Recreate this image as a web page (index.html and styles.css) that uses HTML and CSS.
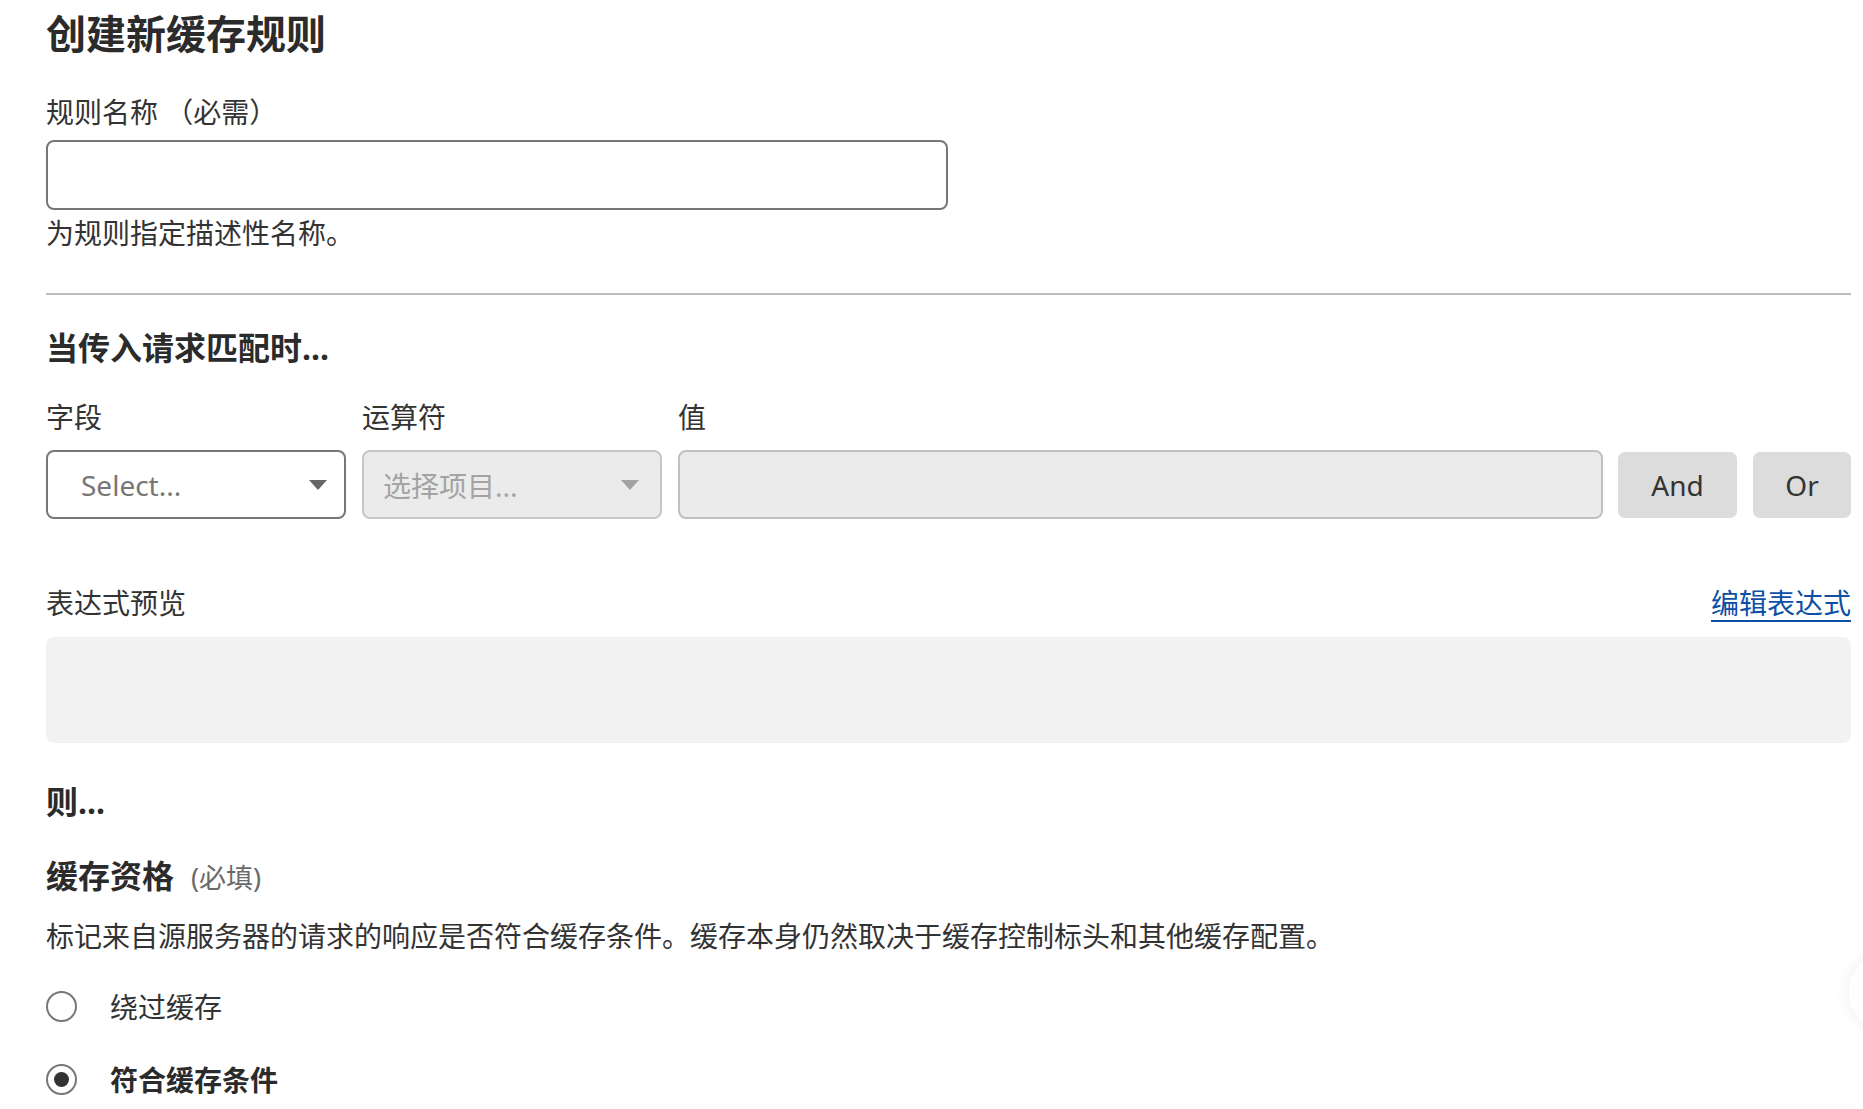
FILE: index.html
```html
<!DOCTYPE html>
<html lang="zh-CN">
<head>
    <meta charset="UTF-8">
    <meta name="viewport" content="width=device-width, initial-scale=1.0">
    <title>创建新缓存规则</title>
    <link rel="stylesheet" href="styles.css">
</head>
<body>

<div class="page">
    <h1 class="page-title">创建新缓存规则</h1>

    <label class="field-label" for="rule-name">规则名称 （必需）</label>
    <input class="text-input" id="rule-name" type="text">
    <p class="help-text">为规则指定描述性名称。</p>

    <hr class="divider">

    <h3 class="section-title">当传入请求匹配时...</h3>

    <div class="match-row">
        <div class="match-col col-field">
            <span class="field-label">字段</span>
            <div class="select">
                <span class="select-text">Select...</span>
                <span class="select-arrow"></span>
            </div>
        </div>
        <div class="match-col col-operator">
            <span class="field-label">运算符</span>
            <div class="select disabled">
                <span class="select-text">选择项目...</span>
                <span class="select-arrow"></span>
            </div>
        </div>
        <div class="match-col col-value">
            <span class="field-label">值</span>
            <div class="value-input"></div>
        </div>
        <button class="logic-btn btn-and">And</button>
        <button class="logic-btn btn-or">Or</button>
    </div>

    <div class="preview-head">
        <span class="field-label">表达式预览</span>
        <a class="edit-link" href="#">编辑表达式</a>
    </div>
    <div class="preview-box"></div>

    <h3 class="section-title then-title">则...</h3>

    <div class="cache-head">
        <span class="cache-title">缓存资格</span>
        <span class="required">(必填)</span>
    </div>
    <p class="cache-desc">标记来自源服务器的请求的响应是否符合缓存条件。缓存本身仍然取决于缓存控制标头和其他缓存配置。</p>

    <div class="radio-row">
        <span class="radio"></span>
        <span class="radio-label">绕过缓存</span>
    </div>
    <div class="radio-row">
        <span class="radio checked"></span>
        <span class="radio-label selected">符合缓存条件</span>
    </div>
</div>

<!-- floating help button, mostly off the right edge -->
<div class="float-btn"></div>

</body>
</html>
```

FILE: styles.css
```css
body {
    margin: 0;
    font-family: "Noto Sans", "Noto Sans CJK SC", sans-serif;
    color: #333;
    background: #fff;
    overflow: hidden;
}
.page {
    padding: 10px 12px 0 46px;
}
.page-title {
    margin: 0;
    font-size: 40px;
    line-height: 48px;
    font-weight: 700;
    color: #2b2b2b;
}
.field-label {
    display: block;
    font-size: 28px;
    line-height: 40px;
    color: #333;
}
.page-title + .field-label {
    margin-top: 34px;
}
.text-input {
    display: block;
    box-sizing: border-box;
    width: 902px;
    height: 70px;
    margin-top: 8px;
    border: 2px solid #777;
    border-radius: 8px;
    background: #fff;
    font: inherit;
}
.help-text {
    margin: 3px 0 0;
    font-size: 28px;
    line-height: 40px;
}
.divider {
    margin: 40px 0 0;
    border: none;
    border-top: 2px solid #bcbcbc;
}
.section-title {
    margin: 31px 0 0;
    font-size: 32px;
    line-height: 44px;
    font-weight: 700;
    color: #2b2b2b;
}

/* condition builder row */
.match-row {
    display: flex;
    align-items: flex-end;
    gap: 16px;
    margin-top: 27px;
}
.match-col {
    display: flex;
    flex-direction: column;
    gap: 13px;
}
.col-field, .col-operator {
    width: 300px;
}
.col-value {
    flex: 1;
}
.select {
    box-sizing: border-box;
    height: 69px;
    display: flex;
    align-items: center;
    justify-content: space-between;
    padding: 0 17px 0 33px;
    border: 2px solid #777;
    border-radius: 8px;
    background: #fff;
}
.select-text {
    font-size: 28px;
    color: #777;
}
.select-arrow {
    width: 0;
    height: 0;
    border-left: 9px solid transparent;
    border-right: 9px solid transparent;
    border-top: 10px solid #666;
}
.select.disabled {
    padding-left: 19px;
    padding-right: 21px;
    border-color: #c6c6c6;
    background: #ebebeb;
}
.select.disabled .select-text {
    color: #a3a3a3;
}
.select.disabled .select-arrow {
    border-top-color: #a3a3a3;
}
.value-input {
    box-sizing: border-box;
    height: 69px;
    border: 2px solid #c0c0c0;
    border-radius: 8px;
    background: #ebebeb;
}
.logic-btn {
    height: 66px;
    margin-bottom: 1px;
    border: none;
    border-radius: 7px;
    background: #dcdcdc;
    color: #333;
    font-family: inherit;
    font-size: 28px;
    cursor: pointer;
}
.btn-and {
    width: 119px;
    margin-left: -1px;
}
.btn-or {
    width: 98px;
}

/* expression preview */
.preview-head {
    display: flex;
    justify-content: space-between;
    align-items: center;
    margin-top: 64px;
}
.edit-link {
    font-size: 28px;
    line-height: 40px;
    color: #0b4fa6;
    text-decoration: underline;
    text-decoration-thickness: 2px;
    text-underline-offset: 6px;
}
.preview-box {
    height: 106px;
    margin-top: 14px;
    border-radius: 8px;
    background: #f2f2f2;
}
.then-title {
    margin-top: 37px;
}

/* cache eligibility */
.cache-head {
    display: flex;
    align-items: baseline;
    gap: 17px;
    margin-top: 30px;
    line-height: 44px;
}
.cache-title {
    font-size: 32px;
    font-weight: 700;
    color: #2b2b2b;
}
.required {
    font-size: 27px;
    color: #6a6a6a;
}
.cache-desc {
    margin: 16px 0 0;
    font-size: 28px;
    line-height: 40px;
}
.radio-row {
    display: flex;
    align-items: center;
    gap: 33px;
    height: 40px;
    margin-top: 30px;
}
.radio-row + .radio-row {
    margin-top: 33px;
}
.radio {
    box-sizing: border-box;
    width: 31px;
    height: 31px;
    border: 2px solid #777;
    border-radius: 50%;
    background: #fff;
    display: flex;
    align-items: center;
    justify-content: center;
}
.radio.checked::after {
    content: "";
    width: 15px;
    height: 15px;
    border-radius: 50%;
    background: #333;
}
.radio-label {
    font-size: 28px;
    color: #333;
}
.radio-label.selected {
    font-weight: 700;
    color: #2b2b2b;
}
.float-btn {
    position: fixed;
    right: -66px;
    top: 952px;
    width: 80px;
    height: 80px;
    border-radius: 50%;
    background: #fff;
    box-shadow: 0 0 18px rgba(0, 0, 0, 0.07);
}
```
